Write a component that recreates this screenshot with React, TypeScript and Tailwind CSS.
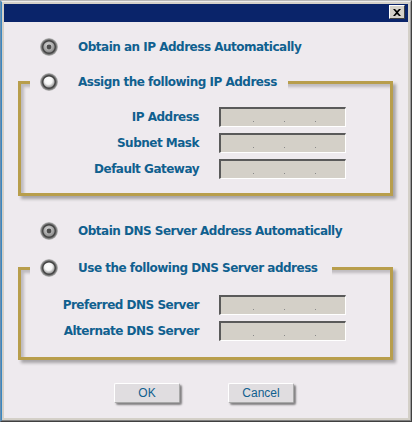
import React from "react";

const labelText =
	"font-['DejaVu_Sans',Verdana,sans-serif] text-[12px] font-bold tracking-[-0.5px] text-[#10608f] whitespace-nowrap";

function Radio({ checked, id }: { checked?: boolean; id: string }) {
	return (
		<svg width="20" height="20" viewBox="0 0 20 20" className="shrink-0">
			<defs>
				<radialGradient id={`${id}-ring`} cx="50%" cy="50%" r="50%">
					<stop offset="0%" stopColor="#8a8a8a" />
					<stop offset="70%" stopColor="#3e3e3e" />
					<stop offset="100%" stopColor="#c4c4c4" />
				</radialGradient>
				<radialGradient id={`${id}-core`} cx="45%" cy="38%" r="60%">
					{checked ? (
						<>
							<stop offset="0%" stopColor="#e2e2e2" />
							<stop offset="100%" stopColor="#8c8c8c" />
						</>
					) : (
						<>
							<stop offset="0%" stopColor="#ffffff" />
							<stop offset="55%" stopColor="#f6f6f6" />
							<stop offset="100%" stopColor="#9c9c9c" />
						</>
					)}
				</radialGradient>
			</defs>
			<circle cx="10" cy="10" r="9" fill={`url(#${id}-ring)`} />
			<circle cx="10" cy="10" r="5.6" fill={`url(#${id}-core)`} />
			{checked && <circle cx="10" cy="10" r="2.4" fill="#4c4c4c" />}
		</svg>
	);
}

function IpBox() {
	return (
		<div className="flex h-[20px] w-[127px] items-end gap-[30px] border-t-2 border-l-2 border-t-[#5a5a5a] border-l-[#5a5a5a] border-r border-b border-r-white border-b-white bg-[#d4d0c8] pb-[4px] pl-[32px]">
			<span className="size-px bg-[#8a8a8a]" />
			<span className="size-px bg-[#8a8a8a]" />
			<span className="size-px bg-[#8a8a8a]" />
		</div>
	);
}

function Group({
	id,
	title,
	fields,
	gapRight,
	pt,
	pb,
	mt,
}: {
	id: string;
	title: string;
	fields: string[];
	gapRight: string;
	pt: string;
	pb: string;
	mt: string;
}) {
	return (
		<fieldset
			className={`${mt} ml-[14px] w-[375px] border-[3px] border-[#b89e4c] shadow-[3px_3px_3px_rgba(0,0,0,0.3),inset_3px_3px_3px_rgba(0,0,0,0.2)]`}
		>
			<legend className={`ml-[9px] bg-[#eeeaee] pl-[9px] ${gapRight}`}>
				<div className="flex h-[20px] items-center gap-[19px]">
					<Radio id={id} />
					<span className={labelText}>{title}</span>
				</div>
			</legend>
			<div className={`grid grid-cols-[178px_127px] gap-x-[20px] gap-y-[6px] ${pt} ${pb}`}>
				{fields.map((f) => (
					<React.Fragment key={f}>
						<span className={`${labelText} self-center text-right`}>{f}</span>
						<IpBox />
					</React.Fragment>
				))}
			</div>
		</fieldset>
	);
}

function DlgButton({ children }: { children: React.ReactNode }) {
	return (
		<button className="h-[20px] w-[66px] rounded-[2px] border border-t-white border-l-white border-r-[#a8a8a8] border-b-[#a8a8a8] bg-[#e0dde0] font-['Liberation_Sans',Arial,sans-serif] text-[12px] text-[#10608f] shadow-[2px_2px_2px_rgba(0,0,0,0.45)]">
			{children}
		</button>
	);
}

export default function App() {
	return (
		<div className="h-[422px] w-[412px] border-t border-l border-r border-b border-t-[#b8b8b8] border-l-[#6a8fb0] border-r-[#404040] border-b-[#404040] bg-[#d4d0c8]">
			<div className="flex h-full flex-col border border-t-[#ececec] border-l-[#3a86c0] border-r-[#9a9a9a] border-b-[#808080] p-[2px]">
				{/* title bar */}
				<div className="flex h-[18px] shrink-0 items-start justify-end bg-[#0a246a] pt-[1px] pr-[3px]">
					<div className="flex h-[14px] w-[16px] items-center justify-center border border-t-white border-l-white border-r-[#404040] border-b-[#404040] bg-[#d4d0c8]">
						<svg width="8" height="7" viewBox="0 0 8 7">
							<path d="M0 0h2l2 2 2-2h2L5 3.5 8 7H6L4 5 2 7H0l3-3.5z" fill="#000" />
						</svg>
					</div>
				</div>

				{/* body */}
				<div className="flex flex-1 flex-col bg-[#eeeaee] pt-[15px]">
					<div className="flex h-[20px] items-center gap-[19px] pl-[35px]">
						<Radio id="r1" checked />
						<span className={labelText}>Obtain an IP Address Automatically</span>
					</div>

					<Group
						id="r2"
						mt="mt-[15px]"
						title="Assign the following IP Address"
						fields={["IP Address", "Subnet Mask", "Default Gateway"]}
						gapRight="pr-[11px]"
						pt="pt-[15px]"
						pb="pb-[14px]"
					/>

					<div className="mt-[25px] flex h-[20px] items-center gap-[19px] pl-[35px]">
						<Radio id="r3" checked />
						<span className={labelText}>Obtain DNS Server Address Automatically</span>
					</div>

					<Group
						id="r4"
						mt="mt-[17px]"
						title="Use the following DNS Server address"
						fields={["Preferred DNS Server", "Alternate DNS Server"]}
						gapRight="pr-[15px]"
						pt="pt-[17px]"
						pb="pb-[16px]"
					/>

					<div className="mt-[23px] ml-[110px] flex gap-[48px]">
						<DlgButton>OK</DlgButton>
						<DlgButton>Cancel</DlgButton>
					</div>
				</div>
			</div>
		</div>
	);
}
